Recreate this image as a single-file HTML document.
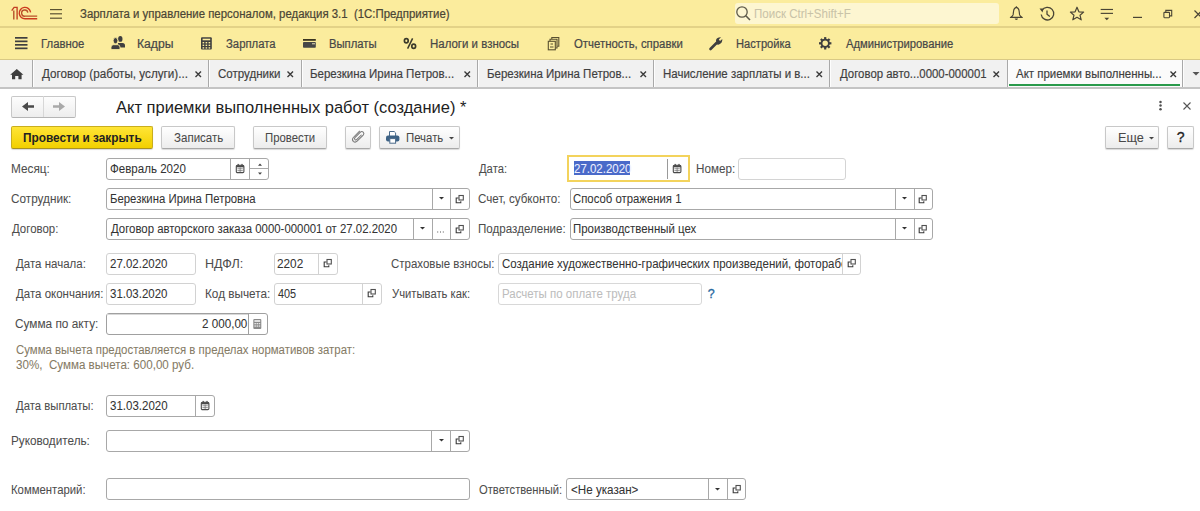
<!DOCTYPE html>
<html><head><meta charset="utf-8"><style>
html,body{margin:0;padding:0;width:1200px;height:511px;overflow:hidden;background:#fff;font-family:"Liberation Sans", sans-serif;}
.t{position:absolute;white-space:pre;font-family:"Liberation Sans", sans-serif;transform-origin:0 0;-webkit-text-stroke:0.05px currentColor;}
svg{overflow:visible}
</style></head><body>
<div style="position:absolute;left:0px;top:0px;width:1200px;height:26px;box-sizing:border-box;background:#fbec9d"></div>
<div style="position:absolute;left:0px;top:26px;width:1200px;height:2px;box-sizing:border-box;background:#e3d287"></div>
<svg style="position:absolute;left:8px;top:4px" width="34" height="18" viewBox="0 0 34 18"><g fill="none" stroke="#c4401f" stroke-width="1.35" stroke-linecap="butt"><path d="M3.7 6.7 L6.1 3.4 L9.1 3.4 L9.1 15.4" stroke="#c23e22"/><path d="M5.8 15.4 L5.8 6.4" stroke="#b34a26"/><path d="M22.6 8.4 A5.7 5.7 0 1 0 17.45 14.75 L29.2 14.75" stroke="#cc3a1e"/><path d="M19.8 8.6 A3.1 3.1 0 1 0 17.2 12.15 L29.2 12.15" stroke="#b8502a"/></g></svg>
<svg style="position:absolute;left:49px;top:8px" width="14" height="12" viewBox="0 0 14 12"><g fill="#5b5232"><rect x="1" y="1" width="12" height="1.2"/><rect x="1" y="5.2" width="12" height="1.2"/><rect x="1" y="9.6" width="12" height="1.2"/></g></svg>
<div class="t" style="left:79.89px;top:7.00px;font-size:12.5px;line-height:14px;color:#4a4535;font-weight:normal;transform:scaleX(0.9121);-webkit-text-stroke:0.22px currentColor;">Зарплата и управление персоналом, редакция 3.1&nbsp;&nbsp;(1С:Предприятие)</div>
<div style="position:absolute;left:734.5px;top:2.5px;width:264.5px;height:21.5px;box-sizing:border-box;background:#fdf6d1;border-radius:3px"></div>
<svg style="position:absolute;left:735px;top:5px" width="17" height="17" viewBox="0 0 17 17"><circle cx="7" cy="7" r="5.2" fill="none" stroke="#5e5a4a" stroke-width="1.3"/><path d="M10.8 10.8 L15 15" stroke="#5e5a4a" stroke-width="1.6"/></svg>
<div class="t" style="left:753.88px;top:7.00px;font-size:12.5px;line-height:14px;color:#c9c3a8;font-weight:normal;transform:scaleX(0.9231);">Поиск Ctrl+Shift+F</div>
<svg style="position:absolute;left:1008px;top:5px" width="18" height="17" viewBox="0 0 18 17"><path d="M8.35 2.4 C6.3 2.8 5.7 4.6 5.5 6.6 L5.1 9.9 Q4.7 11.3 2.4 12.4 L14.3 12.4 Q12 11.3 11.6 9.9 L11.2 6.6 C11 4.6 10.4 2.8 8.35 2.4 Z" fill="none" stroke="#4a4535" stroke-width="1.15" stroke-linejoin="round"/><path d="M7.6 1.2 L9.1 1.2 L8.35 2.6 Z" fill="#4a4535"/><path d="M6.7 13.5 L10 13.5 Q10 14.9 8.35 14.9 Q6.7 14.9 6.7 13.5 Z" fill="#4a4535"/></svg>
<svg style="position:absolute;left:1038px;top:5px" width="18" height="17" viewBox="0 0 18 17"><path d="M4 5.5 A6.3 6.3 0 1 1 3.2 9.5" fill="none" stroke="#4a4535" stroke-width="1.3"/><path d="M1.5 3.5 L5.5 3.5 L4.5 7.5 Z" fill="#4a4535"/><path d="M9 5.5 L9 9.2 L11.8 11.5" fill="none" stroke="#4a4535" stroke-width="1.3"/></svg>
<svg style="position:absolute;left:1068px;top:5px" width="18" height="17" viewBox="0 0 18 17"><path d="M9 2.2 L10.9 6.8 L15.6 7.1 L12 10.2 L13.2 14.8 L9 12.3 L4.8 14.8 L6 10.2 L2.4 7.1 L7.1 6.8 Z" fill="none" stroke="#4a4535" stroke-width="1.2" stroke-linejoin="round"/></svg>
<svg style="position:absolute;left:1098px;top:5px" width="18" height="17" viewBox="0 0 18 17"><g fill="#4a4535"><rect x="2.7" y="3.9" width="12.3" height="1.15"/><rect x="2.7" y="7.8" width="12.3" height="1.15"/><path d="M6.4 12.7 L11.2 12.7 L8.8 15.3 Z"/></g></svg>
<svg style="position:absolute;left:1130px;top:5px" width="16" height="17" viewBox="0 0 16 17"><rect x="3" y="11.8" width="9" height="1.2" fill="#4a4535"/></svg>
<svg style="position:absolute;left:1160px;top:5px" width="16" height="17" viewBox="0 0 16 17"><g fill="none" stroke="#4a4535" stroke-width="1.1"><rect x="3.9" y="7.4" width="5.6" height="5.3" rx="0.6"/><path d="M5.8 7.3 L5.8 5.4 L11.7 5.4 L11.7 10.9 L9.6 10.9"/></g></svg>
<svg style="position:absolute;left:1190px;top:5px" width="12" height="17" viewBox="0 0 12 17"><path d="M4.5 5.5 L12 13 M12 5.5 L4.5 13" stroke="#4a4535" stroke-width="1.2"/></svg>
<div style="position:absolute;left:0px;top:28px;width:1200px;height:31px;box-sizing:border-box;background:#fbec9d"></div>
<div style="position:absolute;left:0px;top:59px;width:1200px;height:1px;box-sizing:border-box;background:#d9c985"></div>
<svg style="position:absolute;left:14px;top:36px" width="15" height="14" viewBox="0 0 15 14"><g fill="#3f3f3f"><rect x="1" y="1" width="12.5" height="1.7"/><rect x="1" y="4.5" width="12.5" height="1.7"/><rect x="1" y="8" width="12.5" height="1.7"/><rect x="1" y="11.5" width="12.5" height="1.7"/></g></svg>
<div class="t" style="left:41.14px;top:37.00px;font-size:12.5px;line-height:14px;color:#474747;font-weight:normal;transform:scaleX(0.9076);-webkit-text-stroke:0.22px currentColor;">Главное</div>
<svg style="position:absolute;left:105px;top:32px" width="22" height="20" viewBox="0 0 22 20"><g fill="#3f3f3f"><ellipse cx="15.3" cy="6.9" rx="2.2" ry="2.9"/><path d="M13 11 L17.5 11 Q20 11 20 13.5 L20 15.5 L13 15.5 Z"/></g><g fill="#3f3f3f" stroke="#fbec9d" stroke-width="0.9"><ellipse cx="10.5" cy="8.7" rx="2.4" ry="3.1"/><path d="M6 17.6 L6 15.2 Q6 12.7 8.5 12.7 L12.5 12.7 Q15 12.7 15 15.2 L15 17.6 Z"/></g></svg>
<div class="t" style="left:136.83px;top:37.00px;font-size:12.5px;line-height:14px;color:#474747;font-weight:normal;transform:scaleX(0.9722);-webkit-text-stroke:0.22px currentColor;">Кадры</div>
<svg style="position:absolute;left:200px;top:36px" width="13" height="15" viewBox="0 0 13 15"><rect x="1" y="1.2" width="10.8" height="12.3" rx="1" fill="#3f3f3f"/><rect x="2.6" y="2.7" width="7.6" height="1.6" fill="#fbec9d"/><g fill="#fbec9d"><rect x="2.6" y="6" width="1.6" height="1.4"/><rect x="5.6" y="6" width="1.6" height="1.4"/><rect x="8.6" y="6" width="1.6" height="1.4"/><rect x="2.6" y="8.6" width="1.6" height="1.4"/><rect x="5.6" y="8.6" width="1.6" height="1.4"/><rect x="8.6" y="8.6" width="1.6" height="1.4"/><rect x="2.6" y="11.2" width="1.6" height="1.4"/><rect x="5.6" y="11.2" width="1.6" height="1.4"/><rect x="8.6" y="11.2" width="1.6" height="1.4"/></g></svg>
<div class="t" style="left:225.89px;top:37.00px;font-size:12.5px;line-height:14px;color:#474747;font-weight:normal;transform:scaleX(0.9074);-webkit-text-stroke:0.22px currentColor;">Зарплата</div>
<svg style="position:absolute;left:302px;top:38px" width="15" height="11" viewBox="0 0 15 11"><rect x="1" y="1" width="12.8" height="1.8" fill="#3b3520"/><rect x="1" y="4" width="12.8" height="5.7" rx="0.8" fill="#474747"/><rect x="10" y="5" width="3" height="1.4" fill="#b8b398"/></svg>
<div class="t" style="left:328.90px;top:37.00px;font-size:12.5px;line-height:14px;color:#474747;font-weight:normal;transform:scaleX(0.902);-webkit-text-stroke:0.22px currentColor;">Выплаты</div>
<svg style="position:absolute;left:400px;top:35px" width="20" height="17" viewBox="0 0 20 17"><g fill="none" stroke="#3b3a2a" stroke-width="1.7"><ellipse cx="6.3" cy="5.8" rx="1.9" ry="2.1"/><ellipse cx="13.7" cy="11.2" rx="1.9" ry="2.1"/></g><path d="M7.6 13.6 L12.6 3.4" stroke="#3b3a2a" stroke-width="1.5"/></svg>
<div class="t" style="left:429.88px;top:37.00px;font-size:12.5px;line-height:14px;color:#474747;font-weight:normal;transform:scaleX(0.9167);-webkit-text-stroke:0.22px currentColor;">Налоги и взносы</div>
<svg style="position:absolute;left:547px;top:36px" width="13" height="15" viewBox="0 0 13 15"><g fill="none" stroke="#595030" stroke-width="1.1"><rect x="1.3" y="5.3" width="7" height="8.5"/><path d="M3 5 L3 3.3 L10 3.3 L10 12 L8.5 12"/><path d="M4.8 3 L4.8 1.5 L11.8 1.5 L11.8 10.2 L10.3 10.2"/><path d="M3 11 L6.5 11 M3.5 8 L6 8" /></g></svg>
<div class="t" style="left:573.50px;top:37.00px;font-size:12.5px;line-height:14px;color:#474747;font-weight:normal;transform:scaleX(0.9101);-webkit-text-stroke:0.22px currentColor;">Отчетность, справки</div>
<svg style="position:absolute;left:707px;top:36px" width="17" height="15" viewBox="0 0 17 15"><path d="M3.5 13 L9.5 7" stroke="#3f3f3f" stroke-width="2.6" stroke-linecap="round"/><path d="M9 4 Q10 1 14 1.2 L11.8 3.6 L13 5 L15.3 3 Q15.6 7 12 8.5 Q10.5 9 9.3 8 Z" fill="#3f3f3f"/></svg>
<div class="t" style="left:735.61px;top:37.00px;font-size:12.5px;line-height:14px;color:#474747;font-weight:normal;transform:scaleX(0.8902);-webkit-text-stroke:0.22px currentColor;">Настройка</div>
<svg style="position:absolute;left:818px;top:36px" width="15" height="15" viewBox="0 0 15 15"><g transform="translate(7.2,7.3)"><g fill="#3f3f3f"><rect x="-1.1" y="-6.2" width="2.2" height="3" transform="rotate(0)"/><rect x="-1.1" y="-6.2" width="2.2" height="3" transform="rotate(45)"/><rect x="-1.1" y="-6.2" width="2.2" height="3" transform="rotate(90)"/><rect x="-1.1" y="-6.2" width="2.2" height="3" transform="rotate(135)"/><rect x="-1.1" y="-6.2" width="2.2" height="3" transform="rotate(180)"/><rect x="-1.1" y="-6.2" width="2.2" height="3" transform="rotate(225)"/><rect x="-1.1" y="-6.2" width="2.2" height="3" transform="rotate(270)"/><rect x="-1.1" y="-6.2" width="2.2" height="3" transform="rotate(315)"/></g><circle r="3.7" fill="none" stroke="#3f3f3f" stroke-width="1.9"/></g></svg>
<div class="t" style="left:845.80px;top:37.00px;font-size:12.5px;line-height:14px;color:#474747;font-weight:normal;transform:scaleX(0.8992);-webkit-text-stroke:0.22px currentColor;">Администрирование</div>
<div style="position:absolute;left:0px;top:60px;width:1200px;height:27px;box-sizing:border-box;background:#f1f1f1"></div>
<div style="position:absolute;left:0px;top:87px;width:1200px;height:2px;box-sizing:border-box;background:#c4c4c4"></div>
<div style="position:absolute;left:1007px;top:60px;width:175px;height:27px;box-sizing:border-box;background:#fbfbfb"></div>
<div style="position:absolute;left:32px;top:60px;width:1px;height:27px;box-sizing:border-box;background:#a9a9a9"></div>
<div style="position:absolute;left:33px;top:60px;width:1px;height:27px;box-sizing:border-box;background:#fdfdfd"></div>
<div style="position:absolute;left:208px;top:60px;width:1px;height:27px;box-sizing:border-box;background:#a9a9a9"></div>
<div style="position:absolute;left:209px;top:60px;width:1px;height:27px;box-sizing:border-box;background:#fdfdfd"></div>
<div style="position:absolute;left:301px;top:60px;width:1px;height:27px;box-sizing:border-box;background:#a9a9a9"></div>
<div style="position:absolute;left:302px;top:60px;width:1px;height:27px;box-sizing:border-box;background:#fdfdfd"></div>
<div style="position:absolute;left:477px;top:60px;width:1px;height:27px;box-sizing:border-box;background:#a9a9a9"></div>
<div style="position:absolute;left:478px;top:60px;width:1px;height:27px;box-sizing:border-box;background:#fdfdfd"></div>
<div style="position:absolute;left:653px;top:60px;width:1px;height:27px;box-sizing:border-box;background:#a9a9a9"></div>
<div style="position:absolute;left:654px;top:60px;width:1px;height:27px;box-sizing:border-box;background:#fdfdfd"></div>
<div style="position:absolute;left:829px;top:60px;width:1px;height:27px;box-sizing:border-box;background:#a9a9a9"></div>
<div style="position:absolute;left:830px;top:60px;width:1px;height:27px;box-sizing:border-box;background:#fdfdfd"></div>
<div style="position:absolute;left:1007px;top:60px;width:1px;height:27px;box-sizing:border-box;background:#a9a9a9"></div>
<div style="position:absolute;left:1008px;top:60px;width:1px;height:27px;box-sizing:border-box;background:#fdfdfd"></div>
<div style="position:absolute;left:1182px;top:60px;width:1px;height:27px;box-sizing:border-box;background:#a9a9a9"></div>
<div style="position:absolute;left:1183px;top:60px;width:1px;height:27px;box-sizing:border-box;background:#fdfdfd"></div>
<svg style="position:absolute;left:9px;top:68px" width="16" height="13" viewBox="0 0 16 13"><path d="M1.2 6.8 L7.8 1 L14.4 6.8 L12.6 6.8 L12.6 11.3 L9.4 11.3 L9.4 8 L6.2 8 L6.2 11.3 L3 11.3 L3 6.8 Z" fill="#3d3d3d"/></svg>
<div class="t" style="left:41.80px;top:67.00px;font-size:12.5px;line-height:14px;color:#3f3f3f;font-weight:normal;transform:scaleX(0.9339);-webkit-text-stroke:0.18px currentColor;">Договор (работы, услуги)...</div>
<svg style="position:absolute;left:194px;top:70px" width="9" height="9" viewBox="0 0 9 9"><path d="M1.5 1.5 L7 7 M7 1.5 L1.5 7" stroke="#3a3a3a" stroke-width="1.4"/></svg>
<div class="t" style="left:217.88px;top:67.00px;font-size:12.5px;line-height:14px;color:#3f3f3f;font-weight:normal;transform:scaleX(0.9242);-webkit-text-stroke:0.18px currentColor;">Сотрудники</div>
<svg style="position:absolute;left:286px;top:70px" width="9" height="9" viewBox="0 0 9 9"><path d="M1.5 1.5 L7 7 M7 1.5 L1.5 7" stroke="#3a3a3a" stroke-width="1.4"/></svg>
<div class="t" style="left:310.38px;top:67.00px;font-size:12.5px;line-height:14px;color:#3f3f3f;font-weight:normal;transform:scaleX(0.9194);-webkit-text-stroke:0.18px currentColor;">Березкина Ирина Петров...</div>
<svg style="position:absolute;left:463px;top:70px" width="9" height="9" viewBox="0 0 9 9"><path d="M1.5 1.5 L7 7 M7 1.5 L1.5 7" stroke="#3a3a3a" stroke-width="1.4"/></svg>
<div class="t" style="left:486.63px;top:67.00px;font-size:12.5px;line-height:14px;color:#3f3f3f;font-weight:normal;transform:scaleX(0.9194);-webkit-text-stroke:0.18px currentColor;">Березкина Ирина Петров...</div>
<svg style="position:absolute;left:639px;top:70px" width="9" height="9" viewBox="0 0 9 9"><path d="M1.5 1.5 L7 7 M7 1.5 L1.5 7" stroke="#3a3a3a" stroke-width="1.4"/></svg>
<div class="t" style="left:662.88px;top:67.00px;font-size:12.5px;line-height:14px;color:#3f3f3f;font-weight:normal;transform:scaleX(0.9177);-webkit-text-stroke:0.18px currentColor;">Начисление зарплаты и в...</div>
<svg style="position:absolute;left:815px;top:70px" width="9" height="9" viewBox="0 0 9 9"><path d="M1.5 1.5 L7 7 M7 1.5 L1.5 7" stroke="#3a3a3a" stroke-width="1.4"/></svg>
<div class="t" style="left:839.80px;top:67.00px;font-size:12.5px;line-height:14px;color:#3f3f3f;font-weight:normal;transform:scaleX(0.9125);-webkit-text-stroke:0.18px currentColor;">Договор авто...0000-000001</div>
<svg style="position:absolute;left:991.5px;top:70px" width="9" height="9" viewBox="0 0 9 9"><path d="M1.5 1.5 L7 7 M7 1.5 L1.5 7" stroke="#3a3a3a" stroke-width="1.4"/></svg>
<div class="t" style="left:1016.30px;top:67.00px;font-size:12.5px;line-height:14px;color:#3f3f3f;font-weight:normal;transform:scaleX(0.9177);-webkit-text-stroke:0.18px currentColor;">Акт приемки выполненны...</div>
<svg style="position:absolute;left:1169px;top:70px" width="9" height="9" viewBox="0 0 9 9"><path d="M1.5 1.5 L7 7 M7 1.5 L1.5 7" stroke="#3a3a3a" stroke-width="1.4"/></svg>
<div style="position:absolute;left:1009px;top:84px;width:171px;height:2px;box-sizing:border-box;background:#2a9a4b"></div>
<svg style="position:absolute;left:1191px;top:70px" width="10" height="8" viewBox="0 0 10 8"><path d="M1.5 2 L8.5 2 L5 5.5 Z" fill="#555"/></svg>
<div style="position:absolute;left:11px;top:95.5px;width:65px;height:22px;box-sizing:border-box;border:1px solid #c8c8c8;border-bottom-color:#b5b5b5;border-radius:2px;background:linear-gradient(#fdfdfd,#ededed)"></div>
<div style="position:absolute;left:43px;top:96px;width:1px;height:21px;box-sizing:border-box;background:#d7d7d7"></div>
<svg style="position:absolute;left:20px;top:100px" width="16" height="13" viewBox="0 0 16 13"><path d="M2 6.5 L8 2 L8 5.2 L14 5.2 L14 7.8 L8 7.8 L8 11 Z" fill="#4a4a4a"/></svg>
<svg style="position:absolute;left:51px;top:100px" width="16" height="13" viewBox="0 0 16 13"><path d="M14 6.5 L8 2 L8 5.2 L2 5.2 L2 7.8 L8 7.8 L8 11 Z" fill="#a9a9a9"/></svg>
<div class="t" style="left:116.30px;top:96.50px;font-size:17.4px;line-height:20px;color:#1e1e1e;font-weight:normal;transform:scaleX(0.9493);-webkit-text-stroke:0;">Акт приемки выполненных работ (создание) *</div>
<svg style="position:absolute;left:1156px;top:99px" width="9" height="14" viewBox="0 0 9 14"><g fill="#505050"><circle cx="4.5" cy="2.9" r="1.25"/><circle cx="4.5" cy="6.6" r="1.25"/><circle cx="4.5" cy="10.3" r="1.25"/></g></svg>
<svg style="position:absolute;left:1181px;top:100px" width="12" height="12" viewBox="0 0 12 12"><path d="M2.5 2.5 L9.5 9.5 M9.5 2.5 L2.5 9.5" stroke="#555" stroke-width="1.1"/></svg>
<div style="position:absolute;left:11px;top:126px;width:142px;height:22.5px;box-sizing:border-box;border:1px solid #c9ae1e;border-bottom-color:#a99222;border-radius:2px;background:linear-gradient(#ffe536,#f2d000);box-shadow:0 1px 1px rgba(0,0,0,0.15)"></div>
<div class="t" style="left:23.45px;top:131.00px;font-size:12.5px;line-height:14px;color:#222;font-weight:bold;transform:scaleX(0.9468);-webkit-text-stroke:0;">Провести и закрыть</div>
<div style="position:absolute;left:161px;top:126px;width:74px;height:22.5px;box-sizing:border-box;border:1px solid #c8c8c8;border-bottom-color:#a8a8a8;border-radius:2px;background:linear-gradient(#ffffff,#ececec);box-shadow:0 1px 1px rgba(0,0,0,0.15)"></div>
<div class="t" style="left:173.88px;top:131.00px;font-size:12.5px;line-height:14px;color:#484848;font-weight:normal;transform:scaleX(0.9231);">Записать</div>
<div style="position:absolute;left:253px;top:126px;width:74px;height:22.5px;box-sizing:border-box;border:1px solid #c8c8c8;border-bottom-color:#a8a8a8;border-radius:2px;background:linear-gradient(#ffffff,#ececec);box-shadow:0 1px 1px rgba(0,0,0,0.15)"></div>
<div class="t" style="left:265.29px;top:131.00px;font-size:12.5px;line-height:14px;color:#484848;font-weight:normal;transform:scaleX(0.9074);">Провести</div>
<div style="position:absolute;left:345px;top:126px;width:26px;height:22.5px;box-sizing:border-box;border:1px solid #c8c8c8;border-bottom-color:#a8a8a8;border-radius:2px;background:linear-gradient(#ffffff,#ececec);box-shadow:0 1px 1px rgba(0,0,0,0.15)"></div>
<svg style="position:absolute;left:350px;top:129px" width="16" height="16" viewBox="0 0 16 16"><path d="M9.6 2.2 L3.3 8.5 Q1.6 10.4 3.3 12.3 Q5.2 14 7.1 12.2 L13.2 6.1 Q14.6 4.5 13.2 3.1 Q11.8 1.8 10.2 3.3 L4.9 8.6 Q4 9.7 5 10.6 Q5.9 11.4 6.9 10.4 L11.3 6" fill="none" stroke="#7a7a7a" stroke-width="1.05" stroke-linecap="round" stroke-linejoin="round"/></svg>
<div style="position:absolute;left:379px;top:126px;width:81px;height:22.5px;box-sizing:border-box;border:1px solid #c8c8c8;border-bottom-color:#a8a8a8;border-radius:2px;background:linear-gradient(#ffffff,#ececec);box-shadow:0 1px 1px rgba(0,0,0,0.15)"></div>
<svg style="position:absolute;left:385px;top:129px" width="16" height="16" viewBox="0 0 16 16"><path d="M4.5 7 L4.5 2.5 L9.2 2.5 L10.6 3.9 L10.6 7" fill="#fff" stroke="#4a6a8a" stroke-width="1"/><rect x="1" y="6.6" width="13.4" height="5.8" rx="2" fill="#3d6285"/><rect x="4.8" y="9.6" width="5.8" height="4.6" fill="#fff" stroke="#4a6a8a" stroke-width="1"/></svg>
<div class="t" style="left:405.89px;top:131.00px;font-size:12.5px;line-height:14px;color:#484848;font-weight:normal;transform:scaleX(0.91);">Печать</div>
<svg style="position:absolute;left:448px;top:136px" width="8" height="5" viewBox="0 0 8 5"><path d="M1 1 L6 1 L3.5 3.5 Z" fill="#444"/></svg>
<div style="position:absolute;left:1105px;top:126px;width:54px;height:22.5px;box-sizing:border-box;border:1px solid #c8c8c8;border-bottom-color:#a8a8a8;border-radius:2px;background:linear-gradient(#ffffff,#ececec);box-shadow:0 1px 1px rgba(0,0,0,0.15)"></div>
<div class="t" style="left:1117.58px;top:131.00px;font-size:12.5px;line-height:14px;color:#484848;font-weight:normal;transform:scaleX(1.0167);">Еще</div>
<svg style="position:absolute;left:1148px;top:136px" width="8" height="5" viewBox="0 0 8 5"><path d="M1 1 L6 1 L3.5 3.5 Z" fill="#444"/></svg>
<div style="position:absolute;left:1167px;top:126px;width:27px;height:22.5px;box-sizing:border-box;border:1px solid #c8c8c8;border-bottom-color:#a8a8a8;border-radius:2px;background:linear-gradient(#ffffff,#ececec);box-shadow:0 1px 1px rgba(0,0,0,0.15)"></div>
<div class="t" style="left:1176.80px;top:129.50px;font-size:14px;line-height:14px;color:#222;font-weight:normal;-webkit-text-stroke:0.35px #222;">?</div>
<div class="t" style="left:10.86px;top:162.00px;font-size:12.5px;line-height:14px;color:#4d4d4d;font-weight:normal;transform:scaleX(0.9436);">Месяц:</div>
<div style="position:absolute;left:106px;top:158px;width:163px;height:22px;box-sizing:border-box;border:1px solid #a8a8a8;border-radius:3px;background:#fff"></div>
<div style="position:absolute;left:230px;top:158px;width:1px;height:22px;background:#a8a8a8"></div>
<div style="position:absolute;left:249px;top:158px;width:1px;height:22px;background:#a8a8a8"></div>
<div class="t" style="left:109.88px;top:162.00px;font-size:12.5px;line-height:14px;color:#333;font-weight:normal;transform:scaleX(0.9235);">Февраль 2020</div>
<svg style="position:absolute;left:235px;top:163px" width="11" height="11" viewBox="0 0 11 11"><rect x="1.3" y="2.3" width="7.6" height="7.3" rx="1.2" fill="none" stroke="#4a4a4a" stroke-width="1.1"/><rect x="1.3" y="2.3" width="7.6" height="2" fill="#4a4a4a"/><rect x="2.6" y="0.9" width="1.2" height="2" fill="#4a4a4a"/><rect x="6.4" y="0.9" width="1.2" height="2" fill="#4a4a4a"/><g fill="#4a4a4a" opacity="0.75"><rect x="2.4" y="5.4" width="5.4" height="0.8"/><rect x="2.4" y="7.3" width="5.4" height="0.8"/><rect x="4.7" y="4.5" width="0.8" height="4.6"/></g></svg>
<div style="position:absolute;left:249px;top:168px;width:19px;height:1px;background:#a8a8a8"></div>
<svg style="position:absolute;left:255px;top:160px" width="10" height="18" viewBox="0 0 10 18"><path d="M3 5.8 L7 5.8 L5 3.6 Z M3 12.6 L7 12.6 L5 14.8 Z" fill="#444"/></svg>
<div class="t" style="left:479.40px;top:162.00px;font-size:12.5px;line-height:14px;color:#4d4d4d;font-weight:normal;transform:scaleX(0.9);">Дата:</div>
<div style="position:absolute;left:567px;top:155px;width:123px;height:27px;box-sizing:border-box;border:2px solid #f3d35c"></div>
<div style="position:absolute;left:667px;top:159px;width:1px;height:20px;background:#9a9a9a"></div>
<div style="position:absolute;left:574px;top:161px;width:56px;height:14px;box-sizing:border-box;background:#4a6ac9"></div>
<div class="t" style="left:573.88px;top:162.00px;font-size:12.5px;line-height:14px;color:#eef0ff;font-weight:normal;transform:scaleX(0.918);">27.02.2020</div>
<svg style="position:absolute;left:671.5px;top:163px" width="11" height="11" viewBox="0 0 11 11"><rect x="1.3" y="2.3" width="7.6" height="7.3" rx="1.2" fill="none" stroke="#4a4a4a" stroke-width="1.1"/><rect x="1.3" y="2.3" width="7.6" height="2" fill="#4a4a4a"/><rect x="2.6" y="0.9" width="1.2" height="2" fill="#4a4a4a"/><rect x="6.4" y="0.9" width="1.2" height="2" fill="#4a4a4a"/><g fill="#4a4a4a" opacity="0.75"><rect x="2.4" y="5.4" width="5.4" height="0.8"/><rect x="2.4" y="7.3" width="5.4" height="0.8"/><rect x="4.7" y="4.5" width="0.8" height="4.6"/></g></svg>
<div class="t" style="left:695.77px;top:162.00px;font-size:12.5px;line-height:14px;color:#4d4d4d;font-weight:normal;transform:scaleX(0.9325);">Номер:</div>
<div style="position:absolute;left:738px;top:158px;width:108px;height:22px;box-sizing:border-box;border:1px solid #d4d4d4;border-radius:3px;background:#fff"></div>
<div class="t" style="left:10.86px;top:192.00px;font-size:12.5px;line-height:14px;color:#4d4d4d;font-weight:normal;transform:scaleX(0.9403);">Сотрудник:</div>
<div style="position:absolute;left:106px;top:188px;width:364px;height:22px;box-sizing:border-box;border:1px solid #a8a8a8;border-radius:3px;background:#fff"></div>
<div style="position:absolute;left:432px;top:188px;width:1px;height:22px;background:#a8a8a8"></div>
<div style="position:absolute;left:450px;top:188px;width:1px;height:22px;background:#a8a8a8"></div>
<div class="t" style="left:109.99px;top:192.00px;font-size:12.5px;line-height:14px;color:#333;font-weight:normal;transform:scaleX(0.9094);">Березкина Ирина Петровна</div>
<svg style="position:absolute;left:437.5px;top:196.3px" width="8" height="5" viewBox="0 0 8 5"><path d="M1 1 L6 1 L3.5 3.5 Z" fill="#333"/></svg>
<svg style="position:absolute;left:454.4px;top:193.5px" width="12" height="11" viewBox="0 0 12 11"><g fill="none" stroke="#3a3a3a" stroke-width="1.1"><path d="M4.6 4 L2.2 4 L2.2 8.7 L6.8 8.7 L6.8 7.2"/><rect x="5" y="1.5" width="4.3" height="4.5" fill="#fff" stroke="#505050"/></g></svg>
<div class="t" style="left:478.47px;top:192.00px;font-size:12.5px;line-height:14px;color:#4d4d4d;font-weight:normal;transform:scaleX(0.931);">Счет, субконто:</div>
<div style="position:absolute;left:570px;top:188px;width:363px;height:22px;box-sizing:border-box;border:1px solid #a8a8a8;border-radius:3px;background:#fff"></div>
<div style="position:absolute;left:895px;top:188px;width:1px;height:22px;background:#a8a8a8"></div>
<div style="position:absolute;left:914px;top:188px;width:1px;height:22px;background:#a8a8a8"></div>
<div class="t" style="left:573.29px;top:192.00px;font-size:12.5px;line-height:14px;color:#333;font-weight:normal;transform:scaleX(0.9085);">Способ отражения 1</div>
<svg style="position:absolute;left:900.5px;top:196.3px" width="8" height="5" viewBox="0 0 8 5"><path d="M1 1 L6 1 L3.5 3.5 Z" fill="#333"/></svg>
<svg style="position:absolute;left:917.4px;top:193.5px" width="12" height="11" viewBox="0 0 12 11"><g fill="none" stroke="#3a3a3a" stroke-width="1.1"><path d="M4.6 4 L2.2 4 L2.2 8.7 L6.8 8.7 L6.8 7.2"/><rect x="5" y="1.5" width="4.3" height="4.5" fill="#fff" stroke="#505050"/></g></svg>
<div class="t" style="left:11.80px;top:222.00px;font-size:12.5px;line-height:14px;color:#4d4d4d;font-weight:normal;transform:scaleX(0.914);">Договор:</div>
<div style="position:absolute;left:106px;top:218px;width:364px;height:22px;box-sizing:border-box;border:1px solid #a8a8a8;border-radius:3px;background:#fff"></div>
<div style="position:absolute;left:413px;top:218px;width:1px;height:22px;background:#a8a8a8"></div>
<div style="position:absolute;left:432px;top:218px;width:1px;height:22px;background:#a8a8a8"></div>
<div style="position:absolute;left:450px;top:218px;width:1px;height:22px;background:#a8a8a8"></div>
<div class="t" style="left:110.90px;top:222.00px;font-size:12.5px;line-height:14px;color:#333;font-weight:normal;transform:scaleX(0.9108);">Договор авторского заказа 0000-000001 от 27.02.2020</div>
<svg style="position:absolute;left:418.5px;top:226.3px" width="8" height="5" viewBox="0 0 8 5"><path d="M1 1 L6 1 L3.5 3.5 Z" fill="#333"/></svg>
<svg style="position:absolute;left:436px;top:230px" width="10" height="4" viewBox="0 0 10 4"><g fill="#555"><rect x="1.2" y="1.5" width="1" height="1"/><rect x="4" y="1.5" width="1" height="1"/><rect x="6.8" y="1.5" width="1" height="1"/></g></svg>
<svg style="position:absolute;left:454.4px;top:223.5px" width="12" height="11" viewBox="0 0 12 11"><g fill="none" stroke="#3a3a3a" stroke-width="1.1"><path d="M4.6 4 L2.2 4 L2.2 8.7 L6.8 8.7 L6.8 7.2"/><rect x="5" y="1.5" width="4.3" height="4.5" fill="#fff" stroke="#505050"/></g></svg>
<div class="t" style="left:478.47px;top:222.00px;font-size:12.5px;line-height:14px;color:#4d4d4d;font-weight:normal;transform:scaleX(0.928);">Подразделение:</div>
<div style="position:absolute;left:570px;top:218px;width:363px;height:22px;box-sizing:border-box;border:1px solid #a8a8a8;border-radius:3px;background:#fff"></div>
<div style="position:absolute;left:895px;top:218px;width:1px;height:22px;background:#a8a8a8"></div>
<div style="position:absolute;left:914px;top:218px;width:1px;height:22px;background:#a8a8a8"></div>
<div class="t" style="left:573.29px;top:222.00px;font-size:12.5px;line-height:14px;color:#333;font-weight:normal;transform:scaleX(0.9149);">Производственный цех</div>
<svg style="position:absolute;left:900.5px;top:226.3px" width="8" height="5" viewBox="0 0 8 5"><path d="M1 1 L6 1 L3.5 3.5 Z" fill="#333"/></svg>
<svg style="position:absolute;left:917.4px;top:223.5px" width="12" height="11" viewBox="0 0 12 11"><g fill="none" stroke="#3a3a3a" stroke-width="1.1"><path d="M4.6 4 L2.2 4 L2.2 8.7 L6.8 8.7 L6.8 7.2"/><rect x="5" y="1.5" width="4.3" height="4.5" fill="#fff" stroke="#505050"/></g></svg>
<div class="t" style="left:15.70px;top:256.50px;font-size:12.5px;line-height:14px;color:#4d4d4d;font-weight:normal;transform:scaleX(0.92);">Дата начала:</div>
<div style="position:absolute;left:106px;top:253px;width:90px;height:22px;box-sizing:border-box;border:1px solid #d2d2d2;border-radius:3px;background:#fff"></div>
<div class="t" style="left:109.88px;top:256.50px;font-size:12.5px;line-height:14px;color:#333;font-weight:normal;transform:scaleX(0.918);">27.02.2020</div>
<div class="t" style="left:204.69px;top:256.50px;font-size:12.5px;line-height:14px;color:#4d4d4d;font-weight:normal;transform:scaleX(1.0056);">НДФЛ:</div>
<div style="position:absolute;left:274px;top:253px;width:64px;height:22px;box-sizing:border-box;border:1px solid #d2d2d2;border-radius:3px;background:#fff"></div>
<div style="position:absolute;left:318px;top:253px;width:1px;height:22px;background:#d2d2d2"></div>
<div class="t" style="left:277.36px;top:256.50px;font-size:12.5px;line-height:14px;color:#333;font-weight:normal;transform:scaleX(0.9423);">2202</div>
<svg style="position:absolute;left:321.9px;top:258px" width="12" height="11" viewBox="0 0 12 11"><g fill="none" stroke="#3a3a3a" stroke-width="1.1"><path d="M4.6 4 L2.2 4 L2.2 8.7 L6.8 8.7 L6.8 7.2"/><rect x="5" y="1.5" width="4.3" height="4.5" fill="#fff" stroke="#505050"/></g></svg>
<div class="t" style="left:390.88px;top:256.50px;font-size:12.5px;line-height:14px;color:#4d4d4d;font-weight:normal;transform:scaleX(0.9189);">Страховые взносы:</div>
<div style="position:absolute;left:498px;top:253px;width:363px;height:22px;box-sizing:border-box;border:1px solid #d2d2d2;border-radius:3px;background:#fff"></div>
<div style="position:absolute;left:842px;top:253px;width:1px;height:22px;background:#d2d2d2"></div>
<div style="position:absolute;left:499px;top:254px;width:343px;height:20px;overflow:hidden"><div class="t" style="left:3px;top:2.5px;font-size:12.5px;line-height:14px;color:#333;transform:scaleX(0.92)">Создание художественно-графических произведений, фоторабот</div></div>
<svg style="position:absolute;left:845.9px;top:258px" width="12" height="11" viewBox="0 0 12 11"><g fill="none" stroke="#3a3a3a" stroke-width="1.1"><path d="M4.6 4 L2.2 4 L2.2 8.7 L6.8 8.7 L6.8 7.2"/><rect x="5" y="1.5" width="4.3" height="4.5" fill="#fff" stroke="#505050"/></g></svg>
<div class="t" style="left:15.70px;top:286.50px;font-size:12.5px;line-height:14px;color:#4d4d4d;font-weight:normal;transform:scaleX(0.9191);">Дата окончания:</div>
<div style="position:absolute;left:106px;top:283px;width:90px;height:22px;box-sizing:border-box;border:1px solid #d2d2d2;border-radius:3px;background:#fff"></div>
<div class="t" style="left:109.88px;top:286.50px;font-size:12.5px;line-height:14px;color:#333;font-weight:normal;transform:scaleX(0.918);">31.03.2020</div>
<div class="t" style="left:204.76px;top:286.50px;font-size:12.5px;line-height:14px;color:#4d4d4d;font-weight:normal;transform:scaleX(0.9412);">Код вычета:</div>
<div style="position:absolute;left:274px;top:283px;width:108px;height:22px;box-sizing:border-box;border:1px solid #d2d2d2;border-radius:3px;background:#fff"></div>
<div style="position:absolute;left:362px;top:283px;width:1px;height:22px;background:#d2d2d2"></div>
<div class="t" style="left:278.30px;top:286.50px;font-size:12.5px;line-height:14px;color:#333;font-weight:normal;transform:scaleX(0.869);">405</div>
<svg style="position:absolute;left:365.9px;top:288px" width="12" height="11" viewBox="0 0 12 11"><g fill="none" stroke="#3a3a3a" stroke-width="1.1"><path d="M4.6 4 L2.2 4 L2.2 8.7 L6.8 8.7 L6.8 7.2"/><rect x="5" y="1.5" width="4.3" height="4.5" fill="#fff" stroke="#505050"/></g></svg>
<div class="t" style="left:391.80px;top:286.50px;font-size:12.5px;line-height:14px;color:#4d4d4d;font-weight:normal;transform:scaleX(0.9);">Учитывать как:</div>
<div style="position:absolute;left:498px;top:283px;width:204px;height:22px;box-sizing:border-box;border:1px solid #d8d8d8;border-radius:3px;background:#fff"></div>
<div class="t" style="left:501.88px;top:286.50px;font-size:12.5px;line-height:14px;color:#bdbdbd;font-weight:normal;transform:scaleX(0.92);">Расчеты по оплате труда</div>
<div class="t" style="left:707.80px;top:286.80px;font-size:12.5px;line-height:14px;color:#26699f;font-weight:normal;-webkit-text-stroke:0.3px currentColor;">?</div>
<div class="t" style="left:14.75px;top:316.50px;font-size:12.5px;line-height:14px;color:#4d4d4d;font-weight:normal;transform:scaleX(0.9465);">Сумма по акту:</div>
<div style="position:absolute;left:106px;top:313px;width:162px;height:22px;box-sizing:border-box;border:1px solid #a0a0a0;border-radius:3px;background:#fff"></div>
<div style="position:absolute;left:248px;top:313px;width:1px;height:22px;background:#a0a0a0"></div>
<div style="position:absolute;left:107px;top:314px;width:141px;height:1px;background:#d8d8d8"></div>
<div class="t" style="left:201.87px;top:316.50px;font-size:12.5px;line-height:14px;color:#333;font-weight:normal;transform:scaleX(0.9319);">2 000,00</div>
<svg style="position:absolute;left:252px;top:318px" width="11" height="12" viewBox="0 0 11 12"><rect x="1.3" y="1" width="8" height="10" rx="1" fill="#8a8a8a"/><rect x="2.4" y="2.1" width="5.8" height="1.8" fill="#e8e8e8"/><g fill="#e8e8e8"><rect x="2.4" y="5" width="1.5" height="1.3"/><rect x="4.55" y="5" width="1.5" height="1.3"/><rect x="6.7" y="5" width="1.5" height="1.3"/><rect x="2.4" y="7.4" width="1.5" height="1.3"/><rect x="4.55" y="7.4" width="1.5" height="1.3"/><rect x="6.7" y="7.4" width="1.5" height="1.3"/></g></svg>
<div class="t" style="left:15.79px;top:343.00px;font-size:12.5px;line-height:14px;color:#857b65;font-weight:normal;transform:scaleX(0.913);">Сумма вычета предоставляется в пределах нормативов затрат:</div>
<div class="t" style="left:15.77px;top:357.50px;font-size:12.5px;line-height:14px;color:#857b65;font-weight:normal;transform:scaleX(0.9284);">30%,&nbsp;&nbsp;Сумма вычета: 600,00 руб.</div>
<div class="t" style="left:15.80px;top:399.00px;font-size:12.5px;line-height:14px;color:#4d4d4d;font-weight:normal;transform:scaleX(0.9059);">Дата выплаты:</div>
<div style="position:absolute;left:106px;top:395px;width:109px;height:22px;box-sizing:border-box;border:1px solid #a8a8a8;border-radius:3px;background:#fff"></div>
<div style="position:absolute;left:195px;top:395px;width:1px;height:22px;background:#a8a8a8"></div>
<div class="t" style="left:110.08px;top:399.00px;font-size:12.5px;line-height:14px;color:#333;font-weight:normal;transform:scaleX(0.9213);">31.03.2020</div>
<svg style="position:absolute;left:199.5px;top:400px" width="11" height="11" viewBox="0 0 11 11"><rect x="1.3" y="2.3" width="7.6" height="7.3" rx="1.2" fill="none" stroke="#4a4a4a" stroke-width="1.1"/><rect x="1.3" y="2.3" width="7.6" height="2" fill="#4a4a4a"/><rect x="2.6" y="0.9" width="1.2" height="2" fill="#4a4a4a"/><rect x="6.4" y="0.9" width="1.2" height="2" fill="#4a4a4a"/><g fill="#4a4a4a" opacity="0.75"><rect x="2.4" y="5.4" width="5.4" height="0.8"/><rect x="2.4" y="7.3" width="5.4" height="0.8"/><rect x="4.7" y="4.5" width="0.8" height="4.6"/></g></svg>
<div class="t" style="left:10.86px;top:433.50px;font-size:12.5px;line-height:14px;color:#4d4d4d;font-weight:normal;transform:scaleX(0.939);">Руководитель:</div>
<div style="position:absolute;left:106px;top:430px;width:364px;height:22px;box-sizing:border-box;border:1px solid #a8a8a8;border-radius:3px;background:#fff"></div>
<div style="position:absolute;left:431px;top:430px;width:1px;height:22px;background:#a8a8a8"></div>
<div style="position:absolute;left:450px;top:430px;width:1px;height:22px;background:#a8a8a8"></div>
<svg style="position:absolute;left:437.5px;top:438.3px" width="8" height="5" viewBox="0 0 8 5"><path d="M1 1 L6 1 L3.5 3.5 Z" fill="#333"/></svg>
<svg style="position:absolute;left:454.4px;top:435px" width="12" height="11" viewBox="0 0 12 11"><g fill="none" stroke="#3a3a3a" stroke-width="1.1"><path d="M4.6 4 L2.2 4 L2.2 8.7 L6.8 8.7 L6.8 7.2"/><rect x="5" y="1.5" width="4.3" height="4.5" fill="#fff" stroke="#505050"/></g></svg>
<div class="t" style="left:10.89px;top:482.50px;font-size:12.5px;line-height:14px;color:#4d4d4d;font-weight:normal;transform:scaleX(0.9075);">Комментарий:</div>
<div style="position:absolute;left:106px;top:478px;width:364px;height:22px;box-sizing:border-box;border:1px solid #a8a8a8;border-radius:3px;background:#fff"></div>
<div class="t" style="left:479.40px;top:482.50px;font-size:12.5px;line-height:14px;color:#4d4d4d;font-weight:normal;transform:scaleX(0.8967);">Ответственный:</div>
<div style="position:absolute;left:566px;top:478px;width:180px;height:22px;box-sizing:border-box;border:1px solid #a8a8a8;border-radius:3px;background:#fff"></div>
<div style="position:absolute;left:708px;top:478px;width:1px;height:22px;background:#a8a8a8"></div>
<div style="position:absolute;left:727px;top:478px;width:1px;height:22px;background:#a8a8a8"></div>
<div class="t" style="left:570.80px;top:482.50px;font-size:12.5px;line-height:14px;color:#333;font-weight:normal;transform:scaleX(0.9306);">&lt;Не указан&gt;</div>
<svg style="position:absolute;left:714px;top:486.8px" width="8" height="5" viewBox="0 0 8 5"><path d="M1 1 L6 1 L3.5 3.5 Z" fill="#333"/></svg>
<svg style="position:absolute;left:730.9px;top:484px" width="12" height="11" viewBox="0 0 12 11"><g fill="none" stroke="#3a3a3a" stroke-width="1.1"><path d="M4.6 4 L2.2 4 L2.2 8.7 L6.8 8.7 L6.8 7.2"/><rect x="5" y="1.5" width="4.3" height="4.5" fill="#fff" stroke="#505050"/></g></svg>
</body></html>
